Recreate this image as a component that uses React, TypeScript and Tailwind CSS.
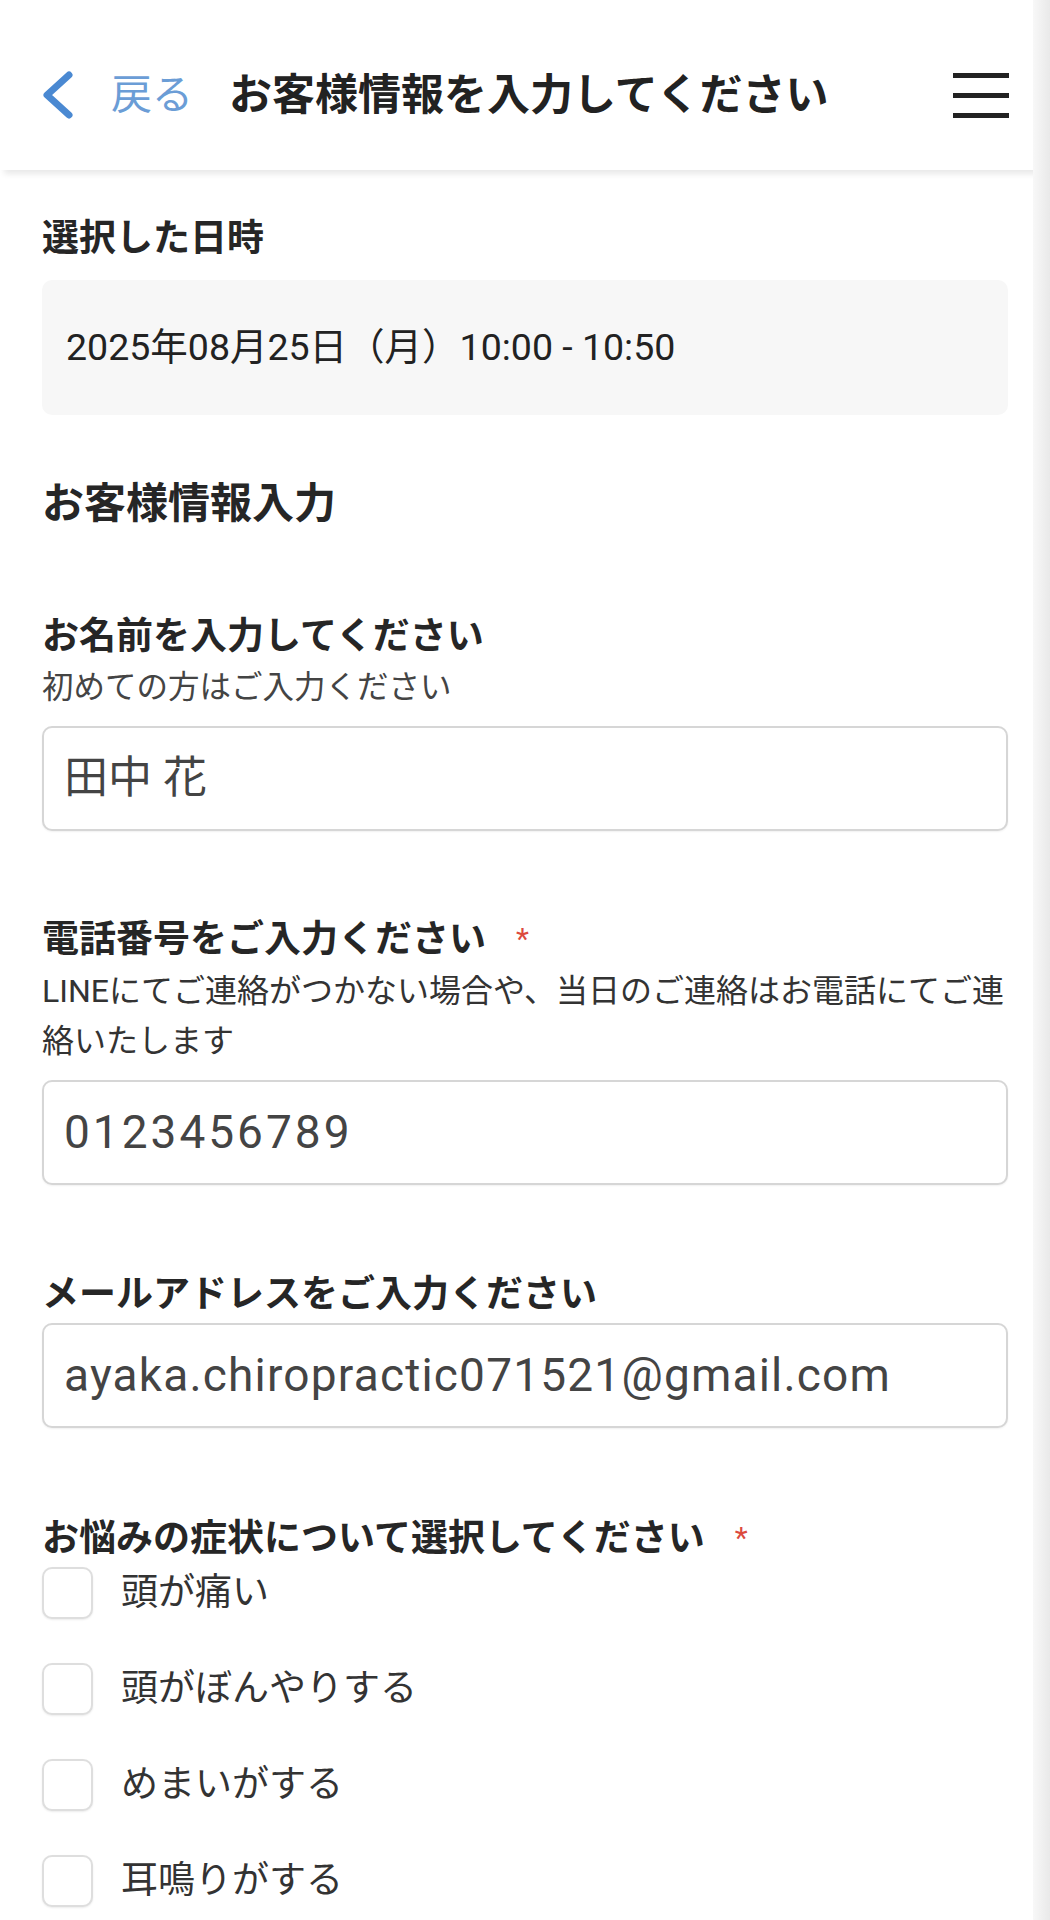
import React from 'react';

const font = { fontFamily: 'Roboto, "Noto Sans CJK JP", sans-serif' };

const symptoms = ['頭が痛い', '頭がぼんやりする', 'めまいがする', '耳鳴りがする'];

function Label({ text, required }: { text: string; required?: boolean }) {
    return (
        <div className="text-[37px] leading-none font-bold text-[#262626] whitespace-nowrap">
            {text}
            {required && <span className="inline-block ml-[30px] translate-y-[3px] text-[30px] align-top font-normal text-[#dc4a3d]">*</span>}
        </div>
    );
}

function Field({ value, className }: { value: string; className: string }) {
    return (
        <div className={"h-[105px] border-2 border-[#d6d6d6] rounded-[10px] bg-white flex items-center pl-[20px] text-[#444] shadow-[0_1px_2px_rgba(0,0,0,0.06)] " + className}>
            {value}
        </div>
    );
}

export default function App() {
    return (
        <div className="min-h-screen bg-white relative" style={font}>
            <header className="h-[170px] pt-[20px] flex items-center pl-[41px] pr-[41px] bg-white relative z-10 shadow-[0_8px_6px_-4px_rgba(0,0,0,0.09)]">
                <svg width="32" height="48" viewBox="0 0 32 48" fill="none">
                    <polyline points="28,4 6,24 28,44" stroke="#4a89d2" strokeWidth="7" strokeLinecap="round" strokeLinejoin="round" />
                </svg>
                <span className="ml-[38px] text-[41px] leading-none text-[#6b9dd6]">戻る</span>
                <h1 className="ml-[36px] text-[43px] leading-none font-bold text-[#222]">お客様情報を入力してください</h1>
                <div className="ml-auto flex flex-col gap-[15px]">
                    <span className="block w-[56px] h-[5px] bg-[#222]" />
                    <span className="block w-[56px] h-[5px] bg-[#222]" />
                    <span className="block w-[56px] h-[5px] bg-[#222]" />
                </div>
            </header>

            <main className="px-[42px] pt-[50px] pb-[60px]">
                <Label text="選択した日時" />
                <div className="mt-[23px] h-[135px] bg-[#f7f7f7] rounded-[10px] flex items-center pl-[24px] text-[37.5px] text-[#222]">
                    2025年08月25日（月）10:00 - 10:50
                </div>

                <h2 className="mt-[68px] text-[42px] leading-none font-bold text-[#262626]">お客様情報入力</h2>

                <div className="mt-[93px]">
                    <Label text="お名前を入力してください" />
                    <p className="mt-[17px] text-[31.5px] leading-none text-[#444]">初めての方はご入力ください</p>
                    <div className="mt-[22px]">
                        <Field value="田中 花" className="text-[44px]" />
                    </div>
                </div>

                <div className="mt-[90px]">
                    <Label text="電話番号をご入力ください" required />
                    <p className="mt-[8px] text-[32px] leading-[50px] text-[#333]">
                        LINEにてご連絡がつかない場合や、当日のご連絡はお電話にてご連絡いたします
                    </p>
                    <div className="mt-[14px]">
                        <Field value="0123456789" className="text-[46px] tracking-[3px]" />
                    </div>
                </div>

                <div className="mt-[91px]">
                    <Label text="メールアドレスをご入力ください" />
                    <div className="mt-[10px]">
                        <Field value="ayaka.chiropractic071521@gmail.com" className="text-[46px] tracking-[1.2px]" />
                    </div>
                </div>

                <div className="mt-[92px]">
                    <Label text="お悩みの症状について選択してください" required />
                    <div className="mt-[10px] flex flex-col gap-[44px]">
                        {symptoms.map((s) => (
                            <label key={s} className="flex items-center">
                                <span className="w-[51px] h-[52px] border-2 border-[#dedede] rounded-[10px] bg-white shadow-[0_1px_2px_rgba(0,0,0,0.08)]" />
                                <span className="ml-[28px] text-[37px] leading-none text-[#333]">{s}</span>
                            </label>
                        ))}
                    </div>
                </div>
            </main>

            <div className="fixed top-0 right-0 h-full w-[17px] bg-gradient-to-r from-[#f8f8f8] to-[#e9e9e9] z-20" />
        </div>
    );
}
